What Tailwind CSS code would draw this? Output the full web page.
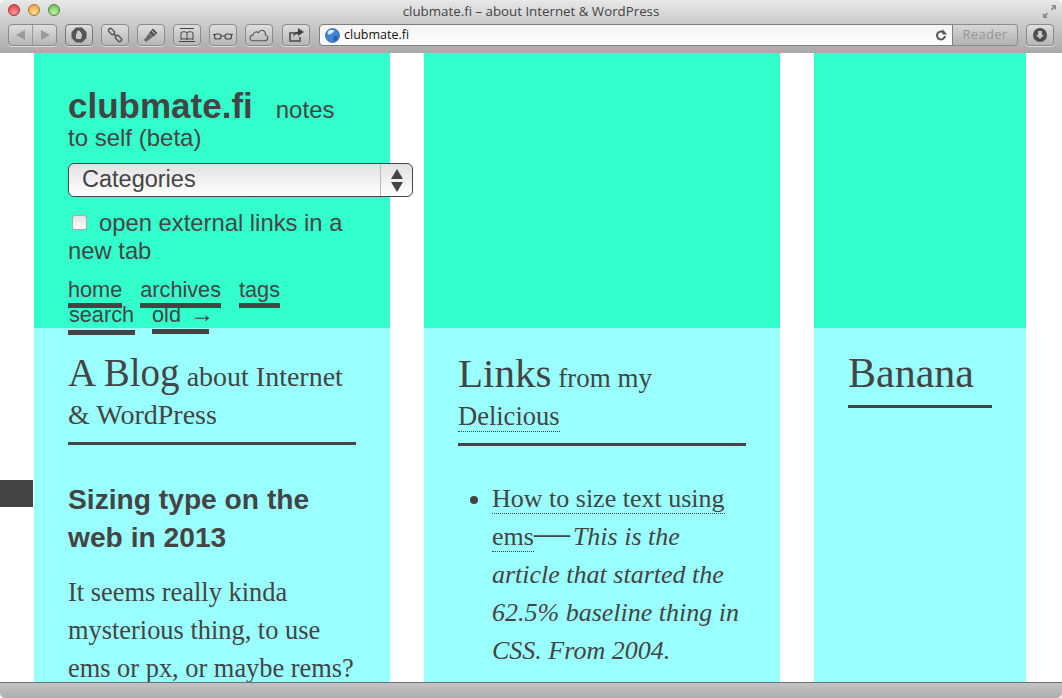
<!DOCTYPE html>
<html lang="en">
<head>
<meta charset="UTF-8">
<title>clubmate.fi – about Internet & WordPress</title>
<script src="https://cdn.jsdelivr.net/npm/@tailwindcss/browser@4"></script>
</head>
<body class="bg-white">
<div class="relative w-[1062px] h-[698px] overflow-hidden flex flex-col text-[#444] font-['Liberation_Sans',Arial,sans-serif]">

  <!-- window toolbar -->
  <header class="h-[53px] shrink-0 rounded-t-[5px] bg-gradient-to-b from-[#e8e8e8] to-[#a9a9a9] flex flex-col">
    <div class="h-[22px] relative flex items-center justify-center">
      <div class="absolute left-[8px] top-[4px] flex gap-[8px]">
        <span class="w-[12px] h-[12px] rounded-full border border-[#9c3a3a] bg-[radial-gradient(circle_at_50%_75%,#ff9a9a,#e02f3a)]"></span>
        <span class="w-[12px] h-[12px] rounded-full border border-[#a8772c] bg-[radial-gradient(circle_at_50%_75%,#ffdf96,#ee9a2c)]"></span>
        <span class="w-[12px] h-[12px] rounded-full border border-[#4c8a3f] bg-[radial-gradient(circle_at_50%_75%,#c4f0a0,#5fb84a)]"></span>
      </div>
      <span class="text-[13.300px] text-[#444] font-['Open_Sans',sans-serif] mt-[1px]">clubmate.fi – about Internet &amp; WordPress</span>
      <svg class="absolute right-[5px] top-[4px]" width="15" height="15" viewBox="0 0 15 15" fill="#8a8a8a"><path d="M9 1h5v5l-1.800-1.800-2.200 2.200-1.200-1.200 2.200-2.200zM1 14V9l1.800 1.800 2.200-2.200 1.200 1.200-2.200 2.200L6 14z"/></svg>
    </div>
    <div class="h-[22px] mt-[2px] flex items-center pl-[8px] pr-[8px]">
      <div class="w-[49px] h-[22px] flex rounded-[4px] border border-[#8b8b8b] bg-gradient-to-b from-[#dedede] to-[#b6b6b6] shadow-[0_1px_0_#ddd]">
        <span class="flex-1 flex items-center justify-center border-r border-[#999]"><svg width="10" height="10" viewBox="0 0 10 10" fill="#9a9a9a"><path d="M9 0v10L0 5z"/></svg></span>
        <span class="flex-1 flex items-center justify-center"><svg width="10" height="10" viewBox="0 0 10 10" fill="#9a9a9a"><path d="M1 0v10l9-5z"/></svg></span>
      </div>
      <div class="ml-[8px] w-[28px] h-[22px] flex items-center justify-center rounded-[4px] border border-[#777] bg-gradient-to-b from-[#dedede] to-[#b6b6b6] shadow-[0_1px_0_#ddd]">
        <svg width="16" height="16" viewBox="0 0 16 16"><path d="M5 .5h6L15.500 5v6L11 15.500H5L.5 11V5z" fill="#555"/><path d="M5 11.500V6.500h1V4h1v-.5h1V4h1v1h1v2l1-.5v2L10 12H6z" fill="#c9c9c9"/></svg>
      </div>
      <div class="ml-[8px] w-[28px] h-[22px] flex items-center justify-center rounded-[4px] border border-[#8b8b8b] bg-gradient-to-b from-[#dedede] to-[#b6b6b6] shadow-[0_1px_0_#ddd]">
        <svg width="16" height="16" viewBox="0 0 16 16" fill="none" stroke="#555" stroke-width="1.400"><rect x="1" y="2.500" width="7" height="4" rx="2" transform="rotate(45 4.500 4.500)"/><rect x="8" y="9.500" width="7" height="4" rx="2" transform="rotate(45 11.500 11.500)"/><path d="M6.500 6.500l3 3"/></svg>
      </div>
      <div class="ml-[8px] w-[28px] h-[22px] flex items-center justify-center rounded-[4px] border border-[#8b8b8b] bg-gradient-to-b from-[#dedede] to-[#b6b6b6] shadow-[0_1px_0_#ddd]">
        <svg width="16" height="16" viewBox="0 0 16 16"><path d="M1 13l5-6.500 3.500 3.500L3 15z" fill="#666"/><path d="M6 6l4-4.500 4.500 4.500L10 10z" fill="#555"/><path d="M9 4l3 3" stroke="#ccc"/></svg>
      </div>
      <div class="ml-[8px] w-[28px] h-[22px] flex items-center justify-center rounded-[4px] border border-[#8b8b8b] bg-gradient-to-b from-[#dedede] to-[#b6b6b6] shadow-[0_1px_0_#ddd]">
        <svg width="18" height="14" viewBox="0 0 18 14" fill="none" stroke="#444"><path d="M2 .5h14M1 13.500h16M3 11.500V4.500c2-1 4-1 6 0 2-1 4-1 6 0v7c-2-1-4-1-6 0-2-1-4-1-6 0zM9 4.500v7"/></svg>
      </div>
      <div class="ml-[8px] w-[28px] h-[22px] flex items-center justify-center rounded-[4px] border border-[#8b8b8b] bg-gradient-to-b from-[#dedede] to-[#b6b6b6] shadow-[0_1px_0_#ddd]">
        <svg width="20" height="9" viewBox="0 0 20 9" fill="none" stroke="#444" stroke-width="1.100"><rect x="1.500" y="3" width="6.500" height="5" rx="2.300"/><rect x="12" y="3" width="6.500" height="5" rx="2.300"/><path d="M8 5h4M0 3.500h2.500M17.500 3.500H20"/></svg>
      </div>
      <div class="ml-[8px] w-[28px] h-[22px] flex items-center justify-center rounded-[4px] border border-[#8b8b8b] bg-gradient-to-b from-[#dedede] to-[#b6b6b6] shadow-[0_1px_0_#ddd]">
        <svg width="20" height="14" viewBox="0 0 22 15" fill="none" stroke="#555" stroke-width="1.200"><path d="M5 13.800c-5 0-5-6-.5-6.300C5.500 3.500 9 3.500 10.500 5c2-4.500 8-3 7.500 2.200 4 1 3 6.600-.5 6.600z"/></svg>
      </div>
      <div class="ml-[9px] w-[28px] h-[22px] flex items-center justify-center rounded-[4px] border border-[#8b8b8b] bg-gradient-to-b from-[#dedede] to-[#b6b6b6] shadow-[0_1px_0_#ddd]">
        <svg width="16" height="14" viewBox="0 0 16 14"><path d="M1 4h7v2H3v6h8V9h2v5H1z" fill="#666"/><path d="M10 0l6 4-6 4V6C8 6 6 7 5 9c0-3 2-5 5-5.500z" fill="#444"/></svg>
      </div>
      <div class="ml-[9px] w-[634px] h-[22px] flex items-center rounded-l-[4px] border border-[#7f7f7f] bg-gradient-to-b from-[#f4f4f4] to-white pl-[5px]">
        <svg width="15" height="15" viewBox="0 0 15 15"><circle cx="7.500" cy="7.500" r="7" fill="#3d86d8" stroke="#2e64a8" stroke-width=".8"/><path d="M4 2.500c2-1 4-1 5 0 .5 1.500-1.500 2-2.500 3S4 7 3 6s0-2.500 1-3.500z" fill="#dcecfb"/><path d="M9 8c2-.5 4 0 4 1.500S11 13 9.500 13 8 9.500 9 8z" fill="#2b5fa5"/></svg>
        <span class="ml-[4px] text-[12.500px] text-[#111] font-['Open_Sans',sans-serif]">clubmate.fi</span>
        <svg class="ml-auto mr-[5px]" width="12" height="12" viewBox="0 0 12 12" fill="none" stroke="#555" stroke-width="2"><path d="M9.500 4.500A4 4 0 1 0 10 7"/><path d="M7.500 0v5.500H12z" fill="#555" stroke="none"/></svg>
      </div>
      <div class="w-[65px] h-[22px] flex items-center justify-center rounded-r-[4px] border border-l-0 border-[#8b8b8b] bg-gradient-to-b from-[#d6d6d6] to-[#b2b2b2] text-[13px] text-[#979797] font-['Open_Sans',sans-serif] tracking-[0.3px]">Reader</div>
      <div class="ml-[8px] w-[28px] h-[22px] flex items-center justify-center rounded-[4px] border border-[#8b8b8b] bg-gradient-to-b from-[#dedede] to-[#b6b6b6] shadow-[0_1px_0_#ddd]">
        <svg width="14" height="14" viewBox="0 0 14 14"><circle cx="7" cy="7" r="7" fill="#4d4d4d"/><path d="M5 3h4v4h2l-4 4-4-4h2z" fill="#c6c6c6"/></svg>
      </div>
    </div>
  </header>

  <!-- page columns -->
  <main class="flex-1 min-h-0 overflow-hidden grid grid-cols-[356px_356px_212px] gap-x-[34px] pl-[34px] content-start">
    <section class="h-[630px] bg-[#99ffff]">
      <div class="h-[275px] bg-[#33ffcc] pl-[34px] pr-[34px] pt-[39px]">
        <p class="text-[24px] leading-[28px]"><strong class="text-[35px] leading-[28px] font-bold mr-[23px]">clubmate.fi</strong>notes to self (beta)</p>
        <div class="mt-[11px] w-[345px] h-[34px] rounded-[6px] border border-[#444] bg-gradient-to-b from-[#e2e2e2] to-white flex items-center text-[23.500px] pl-[13px]">
          <span>Categories</span>
          <span class="ml-auto w-[32px] h-full border-l border-[#bbb] flex flex-col items-center justify-center gap-[3px]">
            <svg width="12" height="10" viewBox="0 0 12 10" fill="#444"><path d="M6 0l6 10H0z"/></svg>
            <svg width="12" height="10" viewBox="0 0 12 10" fill="#444"><path d="M6 10L0 0h12z"/></svg>
          </span>
        </div>
        <p class="mt-[12px] text-[23.800px] leading-[28px]"><input type="checkbox" class="w-[15px] h-[15px] ml-[4px] mr-[12px] appearance-none rounded-[3px] bg-gradient-to-b from-[#e4e4e4] to-white border border-[#aaa] align-[1px]">open external links in a new tab</p>
        <nav class="mt-[12px] text-[21.700px]">
          <div class="flex gap-x-[18px] h-[25px]">
            <a class="block h-[31px] leading-[25px] border-b-[5px] border-[#444]">home</a>
            <a class="block h-[31px] leading-[25px] border-b-[5px] border-[#444]">archives</a>
            <a class="block h-[31px] leading-[25px] border-b-[5px] border-[#444]">tags</a>
          </div>
          <div class="flex gap-x-[17px] h-[25px]">
            <a class="block h-[33px] w-[67px] text-center leading-[25px] border-b-[5px] border-[#444]">search</a>
            <a class="block h-[32px] w-[57px] leading-[25px] border-b-[5px] border-[#444] whitespace-nowrap">old <span class="ml-[3px] text-[24px] leading-[0]">→</span></a>
          </div>
        </nav>
      </div>
      <div class="px-[34px] font-['Liberation_Serif','Times_New_Roman',serif]">
        <h2 class="pt-[26px] pb-[8px] border-b-[3px] border-[#444] text-[28px] leading-[38px]"><span class="text-[39px]">A Blog</span> about Internet &amp; WordPress</h2>
        <h3 class="mt-[35px] font-['Liberation_Sans',Arial,sans-serif] font-bold text-[28.200px] leading-[38px]">Sizing type on the web in 2013</h3>
        <p class="mt-[17px] text-[26.400px] leading-[38px]">It seems really kinda mysterious thing, to use ems or px, or maybe rems?</p>
      </div>
    </section>

    <section class="h-[630px] bg-[#99ffff]">
      <div class="h-[275px] bg-[#33ffcc]"></div>
      <div class="px-[34px] font-['Liberation_Serif','Times_New_Roman',serif]">
        <h2 class="pt-[26px] pb-[8px] border-b-[3px] border-[#444] text-[27px] leading-[38px]"><span class="text-[41px]">Links</span> from my <a class="text-[26.500px] border-b border-dotted border-[#444]">Delicious</a></h2>
        <ul class="mt-[34px] pl-[34px] list-disc text-[26px] leading-[38px]">
          <li><a class="border-b border-dotted border-[#444]">How to size text using ems</a><span class="mr-[3px] text-[36px] leading-[0]">—</span><em>This is the article that started the 62.5% baseline thing in CSS. From 2004.</em></li>
        </ul>
      </div>
    </section>

    <section class="h-[630px] bg-[#99ffff]">
      <div class="h-[275px] bg-[#33ffcc]"></div>
      <div class="px-[34px] font-['Liberation_Serif','Times_New_Roman',serif]">
        <h2 class="pt-[26px] pb-[13px] border-b-[3px] border-[#444] text-[42px] leading-[38px]">Banana</h2>
      </div>
    </section>
  </main>

  <!-- status bar -->
  <footer class="h-[16px] shrink-0 rounded-b-[5px] bg-gradient-to-b from-[#c4c4c4] to-[#adadad] border-t border-[#6f6f6f]"></footer>

  <!-- fixed tab on the left edge -->
  <div class="absolute left-0 top-[480px] w-[33px] h-[27px] bg-[#444]"></div>
</div>
</body>
</html>
